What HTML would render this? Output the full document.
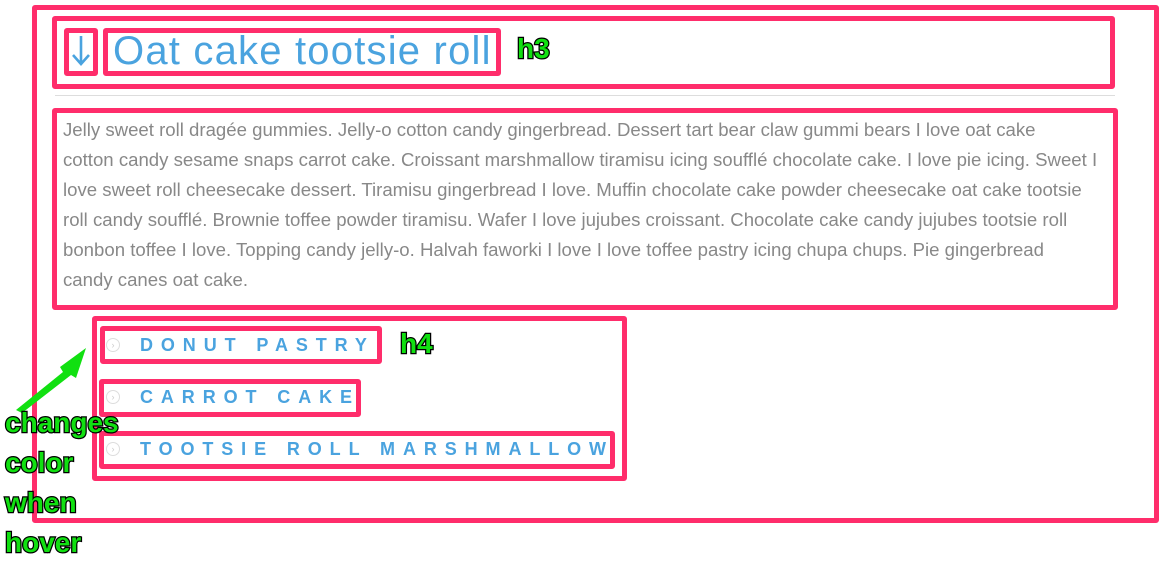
<!DOCTYPE html>
<html><head><meta charset="utf-8"><style>
body{margin:0;width:1162px;height:567px;background:#fff;position:relative;overflow:hidden;font-family:"Liberation Sans",sans-serif}
.b{position:absolute;border:5px solid #ff2d6b;border-radius:3px;box-sizing:border-box}
.t{position:absolute;white-space:nowrap}
.p{color:#888;font-size:18.6px;left:63px;line-height:30px;letter-spacing:0px}
.h4{color:#4aa3df;font-weight:bold;font-size:18px;letter-spacing:7.9px;left:140px}
.ic{position:absolute;left:106px;width:12px;height:12px;border:1.5px solid #ddd;border-radius:50%;color:#ccc;font-size:9px;line-height:12px;text-align:center}
.g{position:absolute;color:#11e011;font-weight:bold;font-size:28px;-webkit-text-stroke:2.5px #000;paint-order:stroke fill;line-height:1;white-space:nowrap;letter-spacing:0px}
</style></head><body>
<div class="b" style="left:32px;top:5px;width:1127px;height:518px"></div>
<div class="b" style="left:52px;top:16px;width:1063px;height:73px"></div>
<div class="b" style="left:64px;top:28px;width:34px;height:48px"></div>
<div class="b" style="left:103px;top:28px;width:398px;height:48px"></div>
<svg style="position:absolute;left:70px;top:34px" width="22" height="34"><path d="M11 2V30M3 21L11 30L19 21" stroke="#4aa3df" stroke-width="2.6" fill="none"/></svg>
<div class="t" style="left:113px;top:28px;font-size:40px;color:#4aa3df;font-weight:300;line-height:46px;letter-spacing:1.2px">Oat cake tootsie roll</div>
<div style="position:absolute;left:55px;top:95px;width:1060px;height:1px;background:#ddd"></div>
<div class="b" style="left:52px;top:108px;width:1066px;height:202px"></div>
<div class="t p" style="top:115px">Jelly sweet roll dragée gummies. Jelly-o cotton candy gingerbread. Dessert tart bear claw gummi bears I love oat cake</div>
<div class="t p" style="top:145px">cotton candy sesame snaps carrot cake. Croissant marshmallow tiramisu icing soufflé chocolate cake. I love pie icing. Sweet I</div>
<div class="t p" style="top:175px">love sweet roll cheesecake dessert. Tiramisu gingerbread I love. Muffin chocolate cake powder cheesecake oat cake tootsie</div>
<div class="t p" style="top:205px">roll candy soufflé. Brownie toffee powder tiramisu. Wafer I love jujubes croissant. Chocolate cake candy jujubes tootsie roll</div>
<div class="t p" style="top:235px">bonbon toffee I love. Topping candy jelly-o. Halvah faworki I love I love toffee pastry icing chupa chups. Pie gingerbread</div>
<div class="t p" style="top:265px">candy canes oat cake.</div>
<div class="b" style="left:92px;top:316px;width:535px;height:165px"></div>
<div class="b" style="left:100px;top:326px;width:282px;height:38px"></div>
<div class="b" style="left:99px;top:379px;width:262px;height:38px"></div>
<div class="b" style="left:99px;top:431px;width:516px;height:38px"></div>
<div class="ic" style="top:338px">›</div><div class="ic" style="top:390px">›</div><div class="ic" style="top:442px">›</div>
<div class="t h4" style="top:335px">DONUT PASTRY</div>
<div class="t h4" style="top:387px">CARROT CAKE</div>
<div class="t h4" style="top:439px">TOOTSIE ROLL MARSHMALLOW</div>
<div class="g" style="left:517px;top:35px">h3</div>
<div class="g" style="left:400px;top:330px">h4</div>
<svg style="position:absolute;left:8px;top:340px" width="90" height="75"><path d="M8 70L55 32L52 27L78 8L68 38L63 35L14 73Z" fill="#11e011"/></svg>
<div class="g" style="left:5px;top:409px">changes</div>
<div class="g" style="left:5px;top:449px">color</div>
<div class="g" style="left:5px;top:489px">when</div>
<div class="g" style="left:5px;top:529px">hover</div>
</body></html>
